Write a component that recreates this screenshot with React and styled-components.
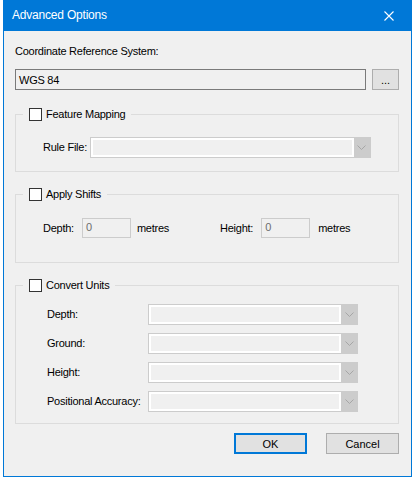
import React from 'react';
import styled, { createGlobalStyle } from 'styled-components';

const GlobalStyle = createGlobalStyle`
  html, body {
    margin: 0;
    padding: 0;
    background: #ffffff;
  }
  body {
    font-family: "Liberation Sans", Arial, sans-serif;
    font-size: 11px;
    letter-spacing: -0.25px;
    color: #000;
  }
`

const Chevron = () => (
  <svg width="9" height="5" viewBox="0 0 9 5">
    <path d="M0.5 0.5 L4.5 4.5 L8.5 0.5" fill="none" stroke="#a6a6a6" strokeWidth="1" />
  </svg>
)

const CloseIcon = () => (
  <svg width="10" height="10" viewBox="0 0 10 10">
    <path d="M0.5 0.5 L9.5 9.5 M9.5 0.5 L0.5 9.5" stroke="#fff" strokeWidth="1.1" />
  </svg>
)

const Combo = ({width}) => {
  return (
    <ComboBox width={width}>
      <ComboField />
      <ComboButton><Chevron /></ComboButton>
    </ComboBox>
  )
}

const GroupBox = ({title, indent, top, bottom, children}) => {
  return (
    <Group top={top} bottom={bottom}>
      <Legend>
        <CheckBox />
        <span>{title}</span>
      </Legend>
      <GroupBody indent={indent}>{children}</GroupBody>
    </Group>
  )
}

const App = () => {
  return (
    <>
      <GlobalStyle />
      <Window>
        <TitleBar>
          <Title>Advanced Options</Title>
          <CloseButton><CloseIcon /></CloseButton>
        </TitleBar>
        <Body>
          <Label>Coordinate Reference System:</Label>
          <CrsRow>
            <CrsInput>WGS 84</CrsInput>
            <BrowseButton>...</BrowseButton>
          </CrsRow>

          <GroupBox title="Feature Mapping" indent={20} top={16} bottom={13}>
            <Row gap={3}>
              <Label>Rule File:</Label>
              <Combo width={281} />
            </Row>
          </GroupBox>

          <GroupBox title="Apply Shifts" indent={20} top={17} bottom={24}>
            <Row>
              <Label>Depth:</Label>
              <NumberBox indent={8}>0</NumberBox>
              <Label indent={6}>metres</Label>
              <Label indent={51}>Height:</Label>
              <NumberBox indent={8}>0</NumberBox>
              <Label indent={8}>metres</Label>
            </Row>
          </GroupBox>

          <GroupBox title="Convert Units" indent={24} top={12} bottom={11}>
            <Stack>
              {['Depth:', 'Ground:', 'Height:', 'Positional Accuracy:'].map((name) => (
                <Row key={name}>
                  <FieldName>{name}</FieldName>
                  <Combo width={210} />
                </Row>
              ))}
            </Stack>
          </GroupBox>

          <Footer>
            <Button primary>OK</Button>
            <Button>Cancel</Button>
          </Footer>
        </Body>
      </Window>
    </>
  )
}

const Window = styled.div`
  box-sizing: border-box;
  margin-left: 3px;
  width: 409px;
  height: 477px;
  border: 1px solid #0078d7;
  border-top: none;
  background: #f0f0f0;
  display: flex;
  flex-direction: column;
`

const TitleBar = styled.div`
  height: 31px;
  background: #0078d7;
  display: flex;
  align-items: center;
  justify-content: space-between;
  padding-left: 9px;
  margin: 0 -1px;
`

const Title = styled.div`
  color: #fff;
  font-size: 12px;
  letter-spacing: -0.2px;
  padding-bottom: 1px;
`

const CloseButton = styled.div`
  width: 46px;
  height: 31px;
  display: flex;
  align-items: center;
  justify-content: center;
`

const Body = styled.div`
  display: flex;
  flex-direction: column;
  padding: 14px 12px 0 11px;
`

const Label = styled.div`
  line-height: 13px;
  white-space: nowrap;
  margin-left: ${props => props.indent || 0}px;
`

const CrsRow = styled.div`
  display: flex;
  gap: 6px;
  margin-top: 11px;
`

const CrsInput = styled.div`
  box-sizing: border-box;
  width: 351px;
  height: 21px;
  border: 1px solid #7a7a7a;
  background: #f0f0f0;
  padding: 0 3px;
  display: flex;
  align-items: center;
`

const BrowseButton = styled.div`
  box-sizing: border-box;
  width: 27px;
  height: 21px;
  border: 1px solid #adadad;
  background: #e1e1e1;
  display: flex;
  align-items: center;
  justify-content: center;
  letter-spacing: 0;
`

const Group = styled.fieldset`
  margin: 18px 0 0 0;
  padding: ${props => props.top}px 0 ${props => props.bottom}px 7px;
  border: 1px solid #dcdcdc;
  min-width: 0;
  & + & {
    margin-top: 16px;
  }
`

const Legend = styled.legend`
  padding: 0 6px;
  display: flex;
  align-items: center;
  gap: 4px;
  line-height: 13px;
`

const CheckBox = styled.span`
  box-sizing: border-box;
  display: block;
  width: 13px;
  height: 13px;
  border: 1px solid #333333;
  background: #ffffff;
`

const GroupBody = styled.div`
  padding-left: ${props => props.indent}px;
`

const Row = styled.div`
  display: flex;
  align-items: center;
  gap: ${props => props.gap || 0}px;
`

const Stack = styled.div`
  display: flex;
  flex-direction: column;
  gap: 8px;
`

const FieldName = styled.div`
  width: 101px;
  line-height: 13px;
  white-space: nowrap;
`

const ComboBox = styled.div`
  box-sizing: border-box;
  width: ${props => props.width}px;
  height: 21px;
  border: 1px solid #cccccc;
  display: flex;
`

const ComboField = styled.div`
  flex: 1;
  background: #f0f0f0;
  box-shadow: inset 0 0 0 2px #ffffff;
`

const ComboButton = styled.div`
  width: 16px;
  background: #cccccc;
  display: flex;
  align-items: center;
  justify-content: center;
`

const NumberBox = styled.div`
  box-sizing: border-box;
  width: 49px;
  height: 20px;
  border: 1px solid #cccccc;
  background: #f0f0f0;
  color: #6d6d6d;
  padding: 2px 3px 0;
  line-height: 13px;
  margin-left: ${props => props.indent || 0}px;
`

const Footer = styled.div`
  display: flex;
  justify-content: flex-end;
  gap: 19px;
  margin-top: 9px;
`

const Button = styled.div`
  box-sizing: border-box;
  width: 73px;
  height: 21px;
  background: #e1e1e1;
  border: ${props => props.primary ? '2px solid #0078d7' : '1px solid #adadad'};
  display: flex;
  align-items: center;
  justify-content: center;
  letter-spacing: 0;
`

export default App
